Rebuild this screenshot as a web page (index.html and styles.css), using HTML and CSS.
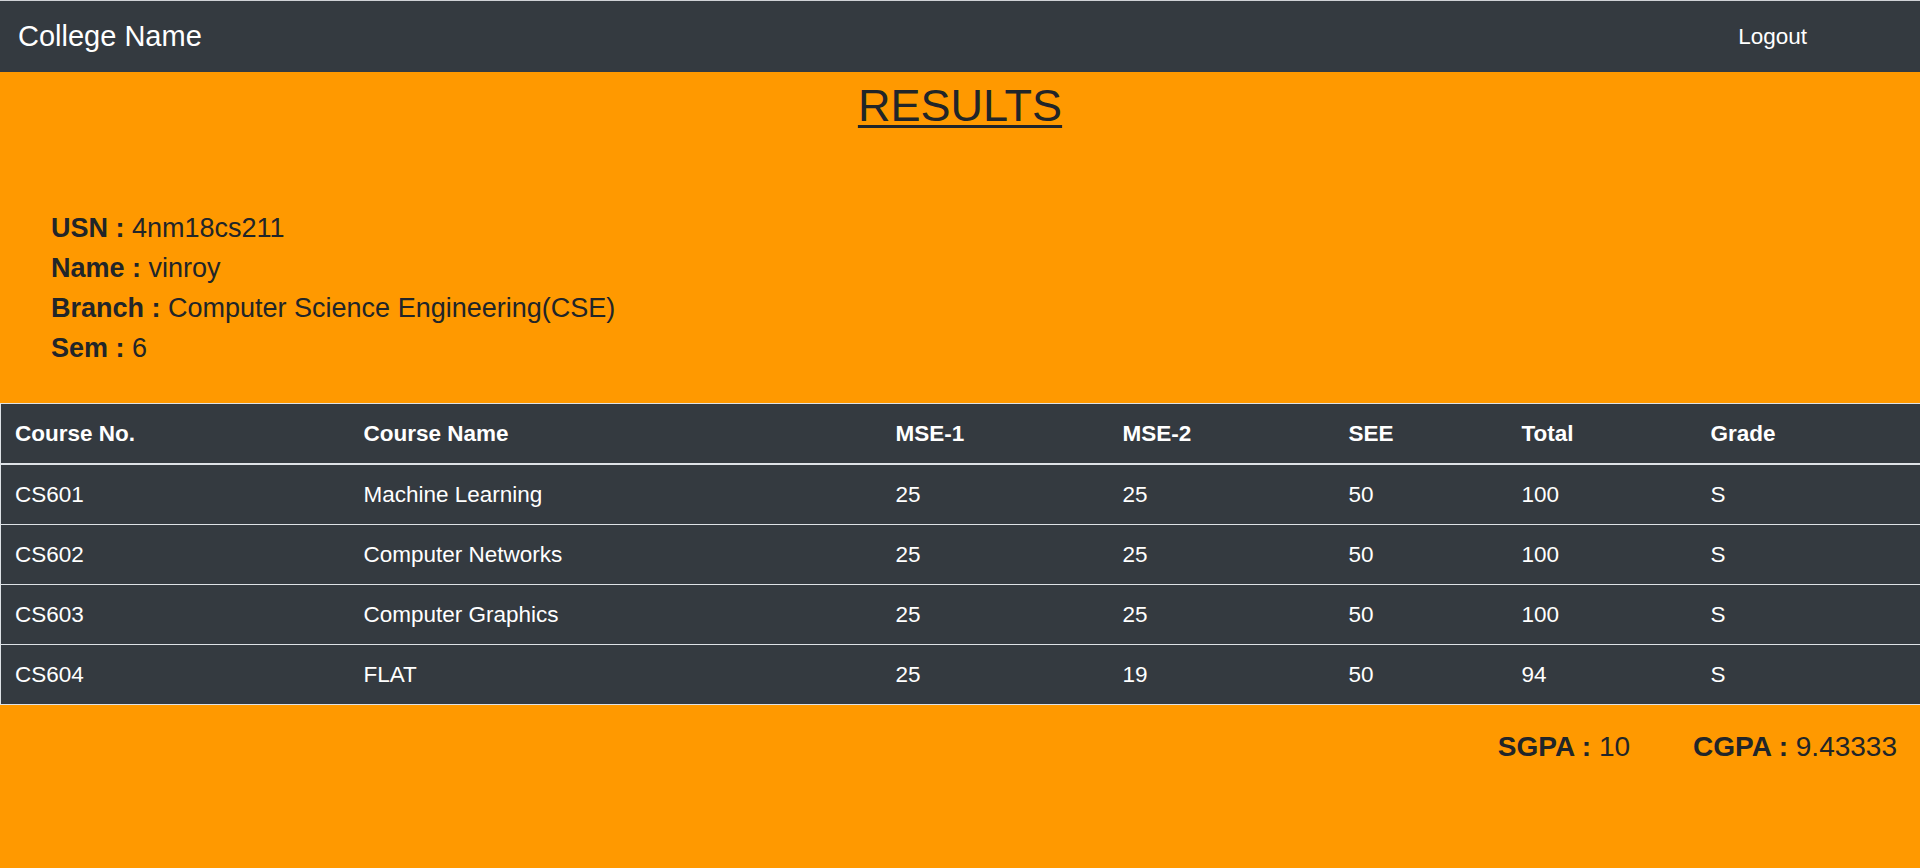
FILE: index.html
```html
<!DOCTYPE html>
<html lang="en">
<head>
<meta charset="utf-8">
<title>Results</title>
<link rel="stylesheet" href="styles.css">
</head>
<body>
<nav class="navbar">
  <a class="brand" href="#">College Name</a>
  <a class="logout" href="#">Logout</a>
</nav>
<main class="page">
  <h1 class="title">RESULTS</h1>
  <div class="info">
    <p><b>USN :</b> 4nm18cs211</p>
    <p><b>Name :</b> vinroy</p>
    <p><b>Branch :</b> Computer Science Engineering(CSE)</p>
    <p><b>Sem :</b> 6</p>
  </div>
  <table class="results">
    <colgroup>
      <col class="c-no"><col class="c-name"><col class="c-mse1"><col class="c-mse2"><col class="c-see"><col class="c-total"><col class="c-grade">
    </colgroup>
    <thead>
      <tr><th>Course No.</th><th>Course Name</th><th>MSE-1</th><th>MSE-2</th><th>SEE</th><th>Total</th><th>Grade</th></tr>
    </thead>
    <tbody>
      <tr><td>CS601</td><td>Machine Learning</td><td>25</td><td>25</td><td>50</td><td>100</td><td>S</td></tr>
      <tr><td>CS602</td><td>Computer Networks</td><td>25</td><td>25</td><td>50</td><td>100</td><td>S</td></tr>
      <tr><td>CS603</td><td>Computer Graphics</td><td>25</td><td>25</td><td>50</td><td>100</td><td>S</td></tr>
      <tr><td>CS604</td><td>FLAT</td><td>25</td><td>19</td><td>50</td><td>94</td><td>S</td></tr>
    </tbody>
  </table>
  <div class="gpa">
    <span><b>SGPA :</b> 10</span>
    <span><b>CGPA :</b> 9.43333</span>
  </div>
</main>
</body>
</html>
```

FILE: styles.css
```css
html, body {
  margin: 0;
  padding: 0;
}
body {
  background: #ff9900;
  color: #212529;
  font-family: "Liberation Sans", Arial, sans-serif;
  min-height: 868px;
}
.navbar {
  display: flex;
  align-items: center;
  justify-content: space-between;
  height: 71px;
  border-top: 1px solid #cfd2d6;
  background: #343a40;
  padding: 0 113px 0 18px;
}
.brand {
  color: #ffffff;
  text-decoration: none;
  font-size: 29px;
}
.logout {
  color: #ffffff;
  text-decoration: none;
  font-size: 22.5px;
}
.title {
  margin: 8px 0 0;
  text-align: center;
  font-size: 45px;
  line-height: 52px;
  font-weight: 400;
  text-decoration: underline;
  text-decoration-thickness: 3px;
  text-underline-offset: 4px;
}
.info {
  margin-top: 76px;
  padding-left: 51px;
  font-size: 27px;
  line-height: 40px;
}
.info p {
  margin: 0;
}
.results {
  margin-top: 35px;
  width: 100%;
  table-layout: fixed;
  border-collapse: collapse;
  border: 1px solid #dee2e6;
  background: #343a40;
  color: #ffffff;
  font-size: 22.5px;
}
.c-no { width: 349px; }
.c-name { width: 532px; }
.c-mse1 { width: 227px; }
.c-mse2 { width: 226px; }
.c-see { width: 173px; }
.c-total { width: 189px; }
.c-grade { width: 224px; }
.results th,
.results td {
  text-align: left;
  padding: 15px 14px;
  line-height: 29px;
  border-top: 1px solid #dee2e6;
}
.results th {
  font-weight: 700;
  border-bottom: 2px solid #dee2e6;
}
.gpa {
  display: flex;
  justify-content: flex-end;
  gap: 63px;
  margin-top: 22px;
  padding-right: 23px;
  font-size: 28px;
  line-height: 40px;
}
```
